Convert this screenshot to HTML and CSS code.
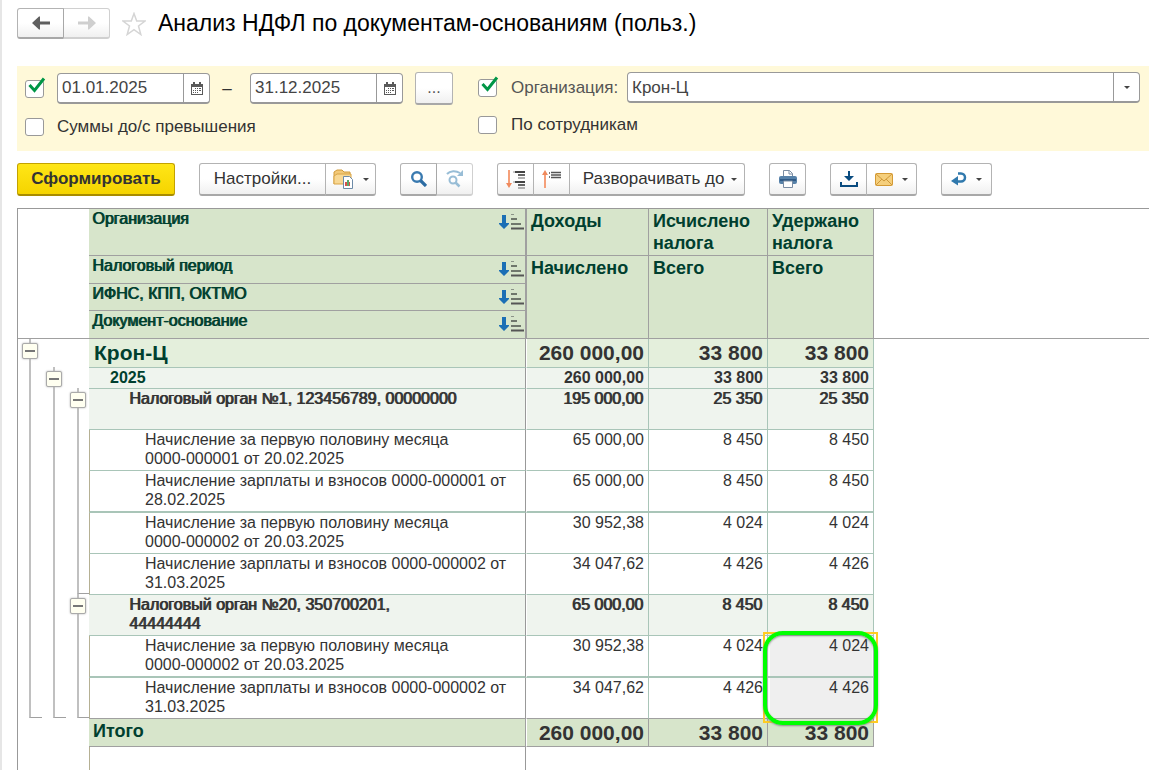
FILE: index.html
```html
<!DOCTYPE html>
<html lang="ru">
<head>
    <meta charset="UTF-8">
    <meta name="viewport" content="width=device-width, initial-scale=1.0">
    <title>Анализ НДФЛ по документам-основаниям (польз.)</title>
    <link rel="stylesheet" href="styles.css">
</head>
<body>
    <svg class="symbols" aria-hidden="true">
        <symbol id="calendar" viewBox="0 0 12 13">
            <path d="M0 2h12v11H0z" fill="#5a5a5a"/>
            <path d="M1 5h10v7H1z" fill="#fff"/>
            <path d="M2 0h2v3H2zM8 0h2v3H8z" fill="#5a5a5a"/>
            <path d="M4 6h1v1H4zM6 6h1v1H6zM8 6h2v1H8zM2 8h1v1H2zM4 8h1v1H4zM6 8h1v1H6zM8 8h2v1H8zM2 10h1v1H2zM4 10h1v1H4zM6 10h1v1H6z" fill="#5a5a5a"/>
        </symbol>
        <symbol id="tick" viewBox="0 0 18 16">
            <path d="M1.500 8l5 5.500L16 1.500" fill="none" stroke="#009646" stroke-width="3"/>
        </symbol>
        <symbol id="caret" viewBox="0 0 6 3">
            <path d="M0 0h6L3 3z" fill="#444"/>
        </symbol>
        <symbol id="sort" viewBox="0 0 25 16">
            <path d="M3 1h4v8h3v1l-5 5-5-5V9h3z" fill="#1b6fb5"/>
            <path d="M12 .500h3" stroke="#8b9388"/>
            <path d="M12 5h6M12 10h10" stroke="#6f776c" stroke-width="2"/>
            <path d="M12 14.500h13" stroke="#555" stroke-width="2"/>
        </symbol>
    </svg>

    <div class="title-bar">
        <div class="group nav">
            <button type="button" class="btn" aria-label="Назад">
                <svg width="18" height="14" viewBox="0 0 18 14"><path d="M0 7l7-6.500h1v5h10v3H8v5H7z" fill="#5f5f5f"/></svg>
            </button>
            <button type="button" class="btn" aria-label="Вперед" disabled>
                <svg width="18" height="14" viewBox="0 0 18 14"><path d="M18 7L11 .500h-1v5H0v3h10v5h1z" fill="#cfcfcf"/></svg>
            </button>
        </div>
        <button type="button" class="star" aria-label="В избранное">
            <svg width="24" height="24" viewBox="0 0 24 24"><path d="M12 1.500l2.700 7.500H23l-6.500 5 2.300 8.500L12 17.700l-6.800 4.800L7.500 14 1 9h8.300z" fill="#fff" stroke="#d5d5d5" stroke-width="1.500"/></svg>
        </button>
        <h1>Анализ НДФЛ по документам-основаниям (польз.)</h1>
    </div>

    <form class="filters">
        <div class="filter-col">
            <div class="filter-row">
                <span class="check">
                    <input type="checkbox" id="usePeriod" aria-label="Период" checked>
                    <svg width="18" height="16"><use href="#tick"/></svg>
                </span>
                <div class="field date">
                    <input type="text" aria-label="Начало периода" value="01.01.2025">
                    <button type="button" aria-label="Выбрать дату начала"><svg width="12" height="13"><use href="#calendar"/></svg></button>
                </div>
                <span class="dash">–</span>
                <div class="field date">
                    <input type="text" aria-label="Конец периода" value="31.12.2025">
                    <button type="button" aria-label="Выбрать дату окончания"><svg width="12" height="13"><use href="#calendar"/></svg></button>
                </div>
                <button type="button" class="btn more">...</button>
            </div>
            <div class="filter-row">
                <span class="check">
                    <input type="checkbox" id="sums">
                    <svg width="18" height="16"><use href="#tick"/></svg>
                </span>
                <label for="sums">Суммы до/с превышения</label>
            </div>
        </div>
        <div class="filter-col wide">
            <div class="filter-row">
                <span class="check">
                    <input type="checkbox" id="useOrg" aria-label="Отбор по организации" checked>
                    <svg width="18" height="16"><use href="#tick"/></svg>
                </span>
                <label for="org" class="muted">Организация:</label>
                <div class="field org">
                    <select id="org">
                        <option>Крон-Ц</option>
                    </select>
                    <span class="drop"><svg width="6" height="3"><use href="#caret"/></svg></span>
                </div>
            </div>
            <div class="filter-row">
                <span class="check">
                    <input type="checkbox" id="staff">
                    <svg width="18" height="16"><use href="#tick"/></svg>
                </span>
                <label for="staff">По сотрудникам</label>
            </div>
        </div>
    </form>

    <div class="toolbar">
        <button type="button" class="btn primary">Сформировать</button>
        <div class="group">
            <button type="button" class="btn text">Настройки...</button>
            <button type="button" class="btn menu" aria-label="Варианты отчета">
                <svg width="21" height="20" viewBox="0 0 21 20">
                    <path d="M1 15V3l3-2h5l2 2h6v3" fill="#f3c978" stroke="#d09a3a"/>
                    <path d="M1 15V7l3-2h14v10z" fill="#f8d894" stroke="#d9a444"/>
                    <path d="M10.500 7.500h6l3 3v9h-9z" fill="#fff" stroke="#6d8ba8"/>
                    <path d="M12 13h2v4h-2z" fill="#d9534f"/><path d="M14 11h2v6h-2z" fill="#59a869"/><path d="M16 13h1v4h-1z" fill="#d9534f"/>
                </svg>
                <svg width="6" height="3"><use href="#caret"/></svg>
            </button>
        </div>
        <div class="group">
            <button type="button" class="btn icon" aria-label="Найти">
                <svg width="16" height="16" viewBox="0 0 16 16"><circle cx="6" cy="6" r="4.800" fill="none" stroke="#3a7ab0" stroke-width="2.400"/><path d="M9.500 9.500l5.500 5.500" stroke="#2c6ca3" stroke-width="3.200"/></svg>
            </button>
            <button type="button" class="btn icon" aria-label="Найти далее" disabled>
                <svg width="18" height="18" viewBox="0 0 18 18"><path d="M1 4c3-3.500 9-3.500 13-1" fill="none" stroke="#98bdd6" stroke-width="2"/><path d="M17 0v6h-6z" fill="#98bdd6"/><circle cx="7" cy="10" r="3.500" fill="none" stroke="#98bdd6" stroke-width="2"/><path d="M9.500 12.500l4 4" stroke="#98bdd6" stroke-width="2.500"/></svg>
            </button>
        </div>
        <div class="group">
            <button type="button" class="btn icon" aria-label="Развернуть группы">
                <svg width="20" height="20" viewBox="0 0 20 20">
                    <path d="M3 1v14" stroke="#f5a07a" stroke-width="2"/><path d="M0 14h6l-3 5z" fill="#f08a5d"/>
                    <path d="M7 3h2M7 13h2" stroke="#999"/>
                    <path d="M9 3h10M9 13h10" stroke="#444" stroke-width="2"/>
                    <path d="M12 6h7M12 16h7" stroke="#666" stroke-width="2"/>
                    <path d="M12 9h7M12 19h7" stroke="#999" stroke-width="1.500"/>
                </svg>
            </button>
            <button type="button" class="btn icon" aria-label="Свернуть группы">
                <svg width="20" height="20" viewBox="0 0 20 20">
                    <path d="M3 5v14" stroke="#f5a07a" stroke-width="2"/><path d="M0 6h6L3 1z" fill="#f08a5d"/>
                    <path d="M7 4h1M7 8h1" stroke="#777" stroke-width="2"/>
                    <path d="M9 3.500h10M9 6h10M9 8.500h10" stroke="#555" stroke-width="1.500"/>
                </svg>
            </button>
            <button type="button" class="btn expand">Разворачивать до <svg width="6" height="3"><use href="#caret"/></svg></button>
        </div>
        <button type="button" class="btn icon" aria-label="Печать">
            <svg width="18" height="18" viewBox="0 0 18 18">
                <path d="M4.500 8V.500h6l3 3V8" fill="#fff" stroke="#7b8da3"/><path d="M10 .500V4h3.500" fill="none" stroke="#7b8da3"/>
                <rect y="6" width="18" height="8" rx="2" fill="#5681a9"/><path d="M1 10h16" stroke="#2f5a86" stroke-width="2"/>
                <path d="M4.500 11h9v6.500h-9z" fill="#fff" stroke="#7b8da3"/>
            </svg>
        </button>
        <div class="group">
            <button type="button" class="btn icon" aria-label="Сохранить">
                <svg width="18" height="16" viewBox="0 0 18 16"><path d="M8 0h2v5h4l-5 5-5-5h4z" fill="#0a4c80"/><path d="M1 11v4h16v-4" fill="none" stroke="#0a4c80" stroke-width="2"/></svg>
            </button>
            <button type="button" class="btn menu" aria-label="Отправить">
                <svg width="18" height="13" viewBox="0 0 18 13"><rect x=".500" y=".500" width="17" height="12" rx="1" fill="#f5cf7c" stroke="#d49a35"/><path d="M1 1l8 7 8-7M1 12l6-6M17 12l-6-6" fill="none" stroke="#cf9838"/></svg>
                <svg width="6" height="3"><use href="#caret"/></svg>
            </button>
        </div>
        <button type="button" class="btn menu" aria-label="Еще">
            <svg width="16" height="14" viewBox="0 0 16 14"><path d="M7 1.500h3a4 4 0 0 1 0 8H6" fill="none" stroke="#3079ad" stroke-width="2.500"/><path d="M0 9l7-5v9.500z" fill="#3079ad"/></svg>
            <svg width="6" height="3"><use href="#caret"/></svg>
        </button>
    </div>

    <div class="sheet">
        <div class="gutter">
            <div class="pane-head"></div>
            <div class="tree">
                <div class="level level-1">
                    <div class="node"><button type="button" aria-label="Свернуть Крон-Ц"></button></div>
                </div>
                <div class="level level-2">
                    <div class="node"><button type="button" aria-label="Свернуть 2025"></button></div>
                </div>
                <div class="level level-3">
                    <div class="node"><button type="button" aria-label="Свернуть орган №1"></button></div>
                    <div class="node"><button type="button" aria-label="Свернуть орган №20"></button></div>
                </div>
            </div>
        </div>
        <div class="report">
            <table>
                <colgroup>
                    <col class="col-name">
                    <col class="col-income">
                    <col class="col-calc">
                    <col class="col-held">
                </colgroup>
                <thead>
                    <tr class="h-first">
                        <th><div class="sortable">Организация <svg width="25" height="16"><use href="#sort"/></svg></div></th>
                        <th class="measure">Доходы</th>
                        <th class="measure">Исчислено налога</th>
                        <th class="measure">Удержано налога</th>
                    </tr>
                    <tr>
                        <th><div class="sortable">Налоговый период <svg width="25" height="16"><use href="#sort"/></svg></div></th>
                        <th class="measure" rowspan="3">Начислено</th>
                        <th class="measure" rowspan="3">Всего</th>
                        <th class="measure" rowspan="3">Всего</th>
                    </tr>
                    <tr class="h-third">
                        <th><div class="sortable">ИФНС, КПП, ОКТМО <svg width="25" height="16"><use href="#sort"/></svg></div></th>
                    </tr>
                    <tr>
                        <th><div class="sortable">Документ-основание <svg width="25" height="16"><use href="#sort"/></svg></div></th>
                    </tr>
                </thead>
                <tbody>
                    <tr class="org-row"><td>Крон-Ц</td><td>260 000,00</td><td>33 800</td><td>33 800</td></tr>
                    <tr class="year-row"><td>2025</td><td>260 000,00</td><td>33 800</td><td>33 800</td></tr>
                    <tr class="tax-row"><td>Налоговый орган №1, 123456789, 00000000</td><td>195 000,00</td><td>25 350</td><td>25 350</td></tr>
                    <tr class="doc-row"><td>Начисление за первую половину месяца<br>0000-000001 от 20.02.2025</td><td>65 000,00</td><td>8 450</td><td>8 450</td></tr>
                    <tr class="doc-row thick"><td>Начисление зарплаты и взносов 0000-000001 от 28.02.2025</td><td>65 000,00</td><td>8 450</td><td>8 450</td></tr>
                    <tr class="doc-row"><td>Начисление за первую половину месяца<br>0000-000002 от 20.03.2025</td><td>30 952,38</td><td>4 024</td><td>4 024</td></tr>
                    <tr class="doc-row"><td>Начисление зарплаты и взносов 0000-000002 от 31.03.2025</td><td>34 047,62</td><td>4 426</td><td>4 426</td></tr>
                    <tr class="tax-row"><td>Налоговый орган №20, 350700201,<br>44444444</td><td>65 000,00</td><td>8 450</td><td>8 450</td></tr>
                    <tr class="doc-row thick"><td>Начисление за первую половину месяца<br>0000-000002 от 20.03.2025</td><td>30 952,38</td><td>4 024</td><td class="selected">4 024<div class="selection"></div><div class="marker"></div></td></tr>
                    <tr class="doc-row last"><td>Начисление зарплаты и взносов 0000-000002 от 31.03.2025</td><td>34 047,62</td><td>4 426</td><td class="selected">4 426</td></tr>
                </tbody>
                <tfoot>
                    <tr class="total-row"><td>Итого</td><td>260 000,00</td><td>33 800</td><td>33 800</td></tr>
                </tfoot>
            </table>
            <div class="rest"></div>
        </div>
        <div class="filler">
            <div class="pane-head"></div>
        </div>
    </div>
</body>
</html>
```

FILE: styles.css
```css
* {
    box-sizing: border-box;
}
body {
    margin: 0;
    height: 100vh;
    overflow: hidden;
    display: flex;
    flex-direction: column;
    padding-left: 15px;
    border-left: 2px solid #e6e6e6;
    background: #fff;
    color: #333;
    font-family: "Liberation Sans", Arial, sans-serif;
    font-size: 17px;
}
button, input, select {
    font: inherit;
    color: inherit;
}
button {
    padding: 0;
    display: flex;
    align-items: center;
    justify-content: center;
}
svg {
    display: block;
    flex: none;
}
.symbols {
    position: absolute;
    width: 0;
    height: 0;
}

/* Title */
.title-bar {
    display: flex;
    align-items: center;
    padding-top: 8px;
    height: 39px;
}
h1 {
    margin: 0;
    font-size: 23px;
    font-weight: normal;
    color: #000;
}
.star {
    width: 48px;
    border: none;
    background: none;
}

/* Buttons */
.btn {
    height: 33px;
    border: 1px solid #b3b3b3;
    border-bottom: 2px solid #a8a8a8;
    border-radius: 3px;
    background: linear-gradient(#fff 50%, #f0f0f0);
    white-space: nowrap;
}
.group {
    display: flex;
}
.group .btn + .btn {
    margin-left: -1px;
    border-top-left-radius: 0;
    border-bottom-left-radius: 0;
}
.group .btn:not(:last-child) {
    border-top-right-radius: 0;
    border-bottom-right-radius: 0;
}
.btn:disabled {
    border-color: #d0d0d0;
    border-left-color: #a8a8a8;
}
.nav .btn {
    width: 47px;
    height: 31px;
}
.btn.icon {
    width: 37px;
}
.btn.menu {
    width: 51px;
    gap: 9px;
}
.btn.text {
    width: 127px;
}
.btn.expand {
    width: 176px;
    gap: 7px;
    padding-left: 6px;
}
.btn.primary {
    width: 158px;
    border-color: #c3a200 #c3a200 #a88c00;
    background: linear-gradient(#ffe617, #f5d400);
    font-weight: bold;
}
.btn.more {
    width: 38px;
    margin-left: 12px;
    font-size: 16px;
    color: #555;
}
.toolbar {
    display: flex;
    gap: 24px;
    padding: 12px 0;
}

/* Filters */
.filters {
    display: flex;
    margin-top: 27px;
    padding: 6px 9px 14px 8px;
    background: #fff9d9;
}
.filter-col {
    width: 453px;
    display: flex;
    flex-direction: column;
    gap: 12px;
}
.filter-col.wide {
    flex: 1;
}
.filter-row {
    display: flex;
    align-items: center;
    height: 20px;
}
.filter-row:first-child {
    height: 33px;
}
.wide .filter-row:first-child {
    height: 31px;
}
.check {
    position: relative;
    width: 32px;
    height: 18px;
}
.wide .check {
    width: 33px;
}
.check input {
    appearance: none;
    display: block;
    margin: 0;
    width: 19px;
    height: 18px;
    border: 1px solid #999;
    border-radius: 3px;
    background: #fff;
}
.check svg {
    position: absolute;
    left: 3px;
    top: -3px;
    display: none;
    pointer-events: none;
}
.check input:checked + svg {
    display: block;
}
.muted {
    width: 116px;
    color: #555;
}
.field {
    display: flex;
    height: 31px;
    border: 1px solid #999;
    border-bottom-width: 2px;
    border-radius: 4px;
    background: #fff;
    overflow: hidden;
}
.field input, .field select {
    flex: 1;
    min-width: 0;
    padding: 0 4px;
    border: none;
    outline: none;
    appearance: none;
    background: none;
    color: #444;
}
.field button, .drop {
    display: flex;
    align-items: center;
    justify-content: center;
    width: 26px;
    border: none;
    border-left: 1px solid #999;
    background: none;
}
.date {
    width: 153px;
}
.dash {
    width: 40px;
    padding-right: 6px;
    text-align: center;
}
.org {
    flex: 1;
}

/* Report sheet */
.sheet {
    flex: 1;
    min-height: 0;
    display: flex;
    border-top: 1px solid #999;
    border-left: 1px solid #999;
    font-size: 16px;
}
.gutter {
    width: 71px;
}
.filler {
    flex: 1;
}
.pane-head {
    height: 130px;
    border-bottom: 1px solid #a0a0a0;
}
.tree {
    display: flex;
    height: 379px;
}
.level {
    width: 24px;
    display: flex;
    flex-direction: column;
}
.level-2 {
    padding-top: 28px;
}
.level-3 {
    padding-top: 49px;
    width: 23px;
}
.node {
    flex: 1;
    margin-left: 11px;
    border-left: 2px solid #c0c0c0;
    border-bottom: 1px solid #a0a0a0;
}
.level-3 .node:first-child {
    flex: none;
    height: 206px;
}
.node button {
    width: 16px;
    height: 16px;
    margin: 4px 0 0 -9px;
    border: 1px solid #aaa;
    border-radius: 2px;
    background: linear-gradient(#777, #777) center / 10px 2px no-repeat #fffff0;
    box-shadow: 0 0 2px #aaa;
}
.report {
    display: flex;
    flex-direction: column;
}
.rest {
    flex: 1;
    width: 437px;
    border-left: 1px solid #b5b093;
    border-right: 1px solid #999;
}
table {
    table-layout: fixed;
    width: 785px;
    border-collapse: separate;
    border-spacing: 0;
}
.col-name {
    width: 437px;
}
.col-income {
    width: 123px;
}
.col-calc {
    width: 119px;
}
.col-held {
    width: 106px;
}
th, td {
    padding: 0 4px;
    vertical-align: top;
    line-height: 19px;
    border-right: 1px solid #a9c5b8;
    border-bottom: 1px solid #a9c5b8;
}
th {
    height: 28px;
    padding: 0 1px 0 3px;
    border-color: #a0a0a0;
    background: #d7e5cb;
    color: #003f2f;
    text-align: left;
}
.h-first th {
    height: 47px;
}
.h-third th {
    height: 27px;
}
.sortable {
    display: flex;
    justify-content: space-between;
    font-weight: normal;
    text-shadow: 1px 0 #003f2f;
}
.sortable svg {
    margin-top: 5px;
}
th.measure {
    padding: 1px 4px;
    font-size: 18px;
    line-height: 22px;
}
td {
    text-align: right;
}
td:first-child {
    border-right-color: #999;
    text-align: left;
}
td:nth-child(2) {
    border-left: 1px solid #fff;
}
th.measure:nth-child(2) {
    border-left: 1px solid #a0a0a0;
}
.org-row td {
    height: 29px;
    background: #e4efdc;
    font-size: 21px;
    font-weight: bold;
    line-height: 28px;
}
.org-row td:first-child, .year-row td:first-child, .total-row td:first-child {
    color: #003f2f;
}
.org-row td:first-child {
    padding-left: 5px;
}
.year-row td {
    height: 21px;
    background: #eff4ee;
    font-weight: bold;
}
.year-row td:first-child {
    padding-left: 21px;
}
.tax-row td {
    height: 41px;
    padding-right: 5px;
    background: #eff4ee;
    text-shadow: 1px 0 #333;
}
.tax-row td:first-child {
    padding-left: 40px;
}
.doc-row td {
    height: 41px;
}
.doc-row td:first-child {
    padding-left: 55px;
    border-left: 1px solid #b5b093;
}
.thick td {
    height: 42px;
    border-bottom-width: 2px;
}
.last td {
    border-bottom-color: #a0a0a0;
}
.total-row td {
    height: 28px;
    border-color: #a0a0a0;
    background: #d7e5cb;
    font-size: 21px;
    font-weight: bold;
    line-height: 27px;
}
.total-row td:nth-child(2) {
    border-left-color: #fff;
}
.total-row td:first-child {
    font-size: 18px;
    line-height: 24px;
}

/* Selected range and its outline */
td.selected {
    position: relative;
    background: #efefef;
    box-shadow: inset 2px 0 #fff, inset -1px 0 #fff;
}
.selection, .marker {
    position: absolute;
    z-index: 1;
    left: -5px;
    top: -4px;
    width: 115px;
    height: 91px;
    border: 2px solid #fc2;
}
.marker {
    top: -5px;
    height: 94px;
    border: 4px solid #0f0;
    border-radius: 20px;
    box-shadow: 0 1px 2px #888, inset 0 1px 2px #888;
}
```
